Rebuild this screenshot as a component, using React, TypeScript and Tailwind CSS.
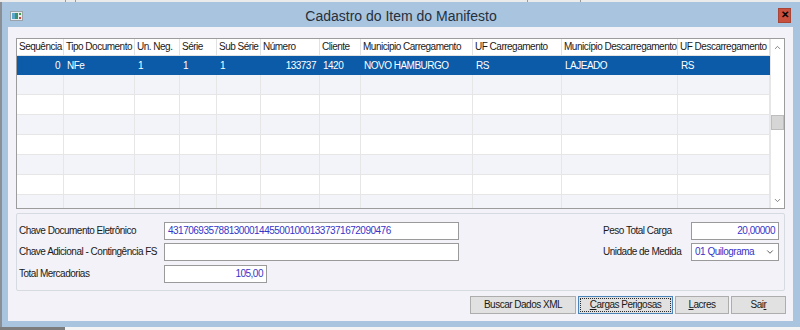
import { ChevronUp, ChevronDown } from "lucide-react";

const cols = [
  { title: "Sequência", w: "w-[47px]", right: true },
  { title: "Tipo Documento", w: "w-[71px]" },
  { title: "Un. Neg.", w: "w-[45px]" },
  { title: "Série", w: "w-[37px]" },
  { title: "Sub Série", w: "w-[44px]" },
  { title: "Número", w: "w-[59px]", right: true },
  { title: "Cliente", w: "w-[41px]" },
  { title: "Municipio Carregamento", w: "w-[112px]" },
  { title: "UF Carregamento", w: "w-[89px]" },
  { title: "Município Descarregamento", w: "w-[116px]" },
  { title: "UF Descarregamento", w: "flex-1" },
];

const selected = ["0", "NFe", "1", "1", "1", "133737", "1420", "NOVO HAMBURGO", "RS", "LAJEADO", "RS"];

const emptyRows = [0, 1, 2, 3, 4, 5, 6];

function WindowIcon() {
  return (
    <svg width="13" height="10" viewBox="0 0 13 10">
      <rect x="0.5" y="0.5" width="12" height="9" fill="#e8ecef" stroke="#9aa3ab" />
      <rect x="2" y="2" width="6" height="6" fill="#3f8f6a" />
      <rect x="2" y="2" width="3" height="6" fill="#5aa7c9" />
      <rect x="9" y="2" width="2" height="2" fill="#3da04a" />
      <rect x="9" y="6" width="2" height="2" fill="#c94a3a" />
    </svg>
  );
}

function Grid() {
  return (
    <div className="flex h-[171px] border border-[#9c9c9c] bg-white overflow-hidden">
      <div className="flex-1 flex flex-col overflow-hidden">
        {/* cabeçalho */}
        <div className="flex h-[17px] shrink-0 border-b border-[#e2e2e2]">
          {cols.map((c) => (
            <div
              key={c.title}
              className={`${c.w} shrink-0 border-r border-[#e2e2e2] pl-[2px] flex items-center whitespace-nowrap overflow-hidden text-[#1a1a1a]`}
            >
              {c.title}
            </div>
          ))}
        </div>
        {/* linha selecionada */}
        <div className="flex h-[19px] shrink-0 bg-[#0b5ba8] text-white">
          {cols.map((c, i) => (
            <div
              key={c.title}
              className={`${c.w} shrink-0 flex items-center whitespace-nowrap overflow-hidden ${
                c.right ? "justify-end pr-[4px]" : "pl-[3px]"
              }`}
            >
              {selected[i]}
            </div>
          ))}
        </div>
        {emptyRows.map((r) => (
          <div
            key={r}
            className={`flex h-[20px] shrink-0 border-b border-[#e6e6e6] ${
              r % 2 === 0 ? "bg-[#f3f4f9]" : "bg-white"
            }`}
          >
            {cols.map((c) => (
              <div key={c.title} className={`${c.w} shrink-0 border-r border-[#e6e6e6]`} />
            ))}
          </div>
        ))}
      </div>
      {/* barra de rolagem */}
      <div className="w-[14px] shrink-0 flex flex-col border-l border-[#e6e6e6] bg-white">
        <div className="h-[17px] flex items-center justify-center text-[#606060]">
          <ChevronUp size={9} strokeWidth={2} />
        </div>
        <div className="flex-1 flex flex-col">
          <div className="h-[59px]" />
          <div className="h-[15px] bg-[#d6d6d6] border border-[#bdbdbd]" />
          <div className="flex-1" />
        </div>
        <div className="h-[15px] flex items-center justify-center text-[#606060]">
          <ChevronDown size={9} strokeWidth={2} />
        </div>
      </div>
    </div>
  );
}

function Input({ value, w, right }: { value?: string; w: string; right?: boolean }) {
  return (
    <div
      className={`${w} h-[18px] bg-white border border-[#9a9a9a] flex items-center text-[#3535c8] whitespace-nowrap overflow-hidden ${
        right ? "justify-end pr-[3px]" : "pl-[3px]"
      }`}
    >
      {value}
    </div>
  );
}

function Button({ children, w, focused }: { children: React.ReactNode; w: string; focused?: boolean }) {
  return (
    <button
      className={`${w} h-[18px] bg-[#e1e1e1] border ${
        focused ? "border-[#4a84b8] p-[1px]" : "border-[#adadad]"
      } text-[#1a1a1a] flex items-stretch`}
    >
      <span
        className={`flex-1 flex items-center justify-center ${
          focused ? "border border-dotted border-[#2a2a2a]" : ""
        }`}
      >
        {children}
      </span>
    </button>
  );
}

export default function App() {
  return (
    <div className="w-[800px] h-[330px] overflow-hidden bg-[#f4f4f4] font-['Liberation_Sans',Arial,sans-serif] text-[10px] tracking-[-0.5px] leading-none">
      {/* faixa da janela de trás */}
      <div className="h-[2px] flex bg-[#ebebeb]">
        <div className="w-[66px] border-r border-[#9a9a9a]" />
        <div className="w-[10px] border-r border-[#9a9a9a]" />
        <div className="w-[452px] border-r border-[#9a9a9a]" />
        <div className="w-[53px] border-r border-[#9a9a9a]" />
      </div>

      {/* janela */}
      <div className="h-[325px] flex flex-col bg-[#a9c4df] border-l-2 border-[#8a8f96]">
        <div className="h-[25px] shrink-0 grid grid-cols-[1fr_auto_1fr] items-center">
          <div className="pl-[8px] pt-[2px]">
            <WindowIcon />
          </div>
          <div className="text-[14px] tracking-normal text-[#25303c] pt-[2px]">
            Cadastro do Item do Manifesto
          </div>
          <div className="flex justify-end pr-[9px] pt-[1px]">
            <div className="w-[13px] h-[15px] bg-[#c7503f] border border-[#a84536] flex items-center justify-center text-black text-[10px] font-bold tracking-normal">
              ✕
            </div>
          </div>
        </div>

        {/* área cliente */}
        <div className="ml-[6px] mr-[7px] h-[294px] bg-[#f2f2f8] flex flex-col pt-[11px] px-[8px]">
          <Grid />

          {/* painel de dados */}
          <div className="mt-[4px] h-[78px] border border-[#d6dbe2] rounded-[2px] flex pt-[8px] pl-[2px] pr-[5px]">
            <div className="flex flex-col">
              <div className="flex items-center h-[18px]">
                <div className="w-[145px] text-[#1a1a1a]">Chave Documento Eletrônico</div>
                <Input w="w-[295px]" value="43170693578813000144550010001337371672090476" />
              </div>
              <div className="flex items-center h-[18px] mt-[3px]">
                <div className="w-[145px] text-[#1a1a1a]">Chave Adicional - Contingência FS</div>
                <Input w="w-[295px]" />
              </div>
              <div className="flex items-center h-[18px] mt-[4px]">
                <div className="w-[145px] text-[#1a1a1a]">Total Mercadorias</div>
                <Input w="w-[103px]" value="105,00" right />
              </div>
            </div>
            <div className="flex-1" />
            <div className="flex flex-col">
              <div className="flex items-center h-[18px]">
                <div className="w-[88px] text-[#1a1a1a]">Peso Total Carga</div>
                <Input w="w-[88px]" value="20,00000" right />
              </div>
              <div className="flex items-center h-[18px] mt-[3px]">
                <div className="w-[88px] text-[#1a1a1a]">Unidade de Medida</div>
                <div className="w-[88px] h-[18px] bg-white border border-[#9a9a9a] flex items-center justify-between pl-[3px] pr-[3px] text-[#3535c8]">
                  <span>01 Quilograma</span>
                  <ChevronDown size={10} strokeWidth={2} className="text-[#404040]" />
                </div>
              </div>
            </div>
          </div>

          {/* botões */}
          <div className="mt-[5px] flex justify-end gap-[2px] -mr-[1px]">
            <Button w="w-[106px]">Buscar Dados XML</Button>
            <Button w="w-[95px]" focused>
              <span>
                <span className="underline">C</span>argas Perigosas
              </span>
            </Button>
            <Button w="w-[54px]">
              <span>
                <span className="underline">L</span>acres
              </span>
            </Button>
            <Button w="w-[55px]">
              <span>
                Sai<span className="underline">r</span>
              </span>
            </Button>
          </div>
        </div>
      </div>

      {/* faixa inferior */}
      <div className="h-[3px] flex">
        <div className="w-[65px] bg-[#7d7d7d]" />
        <div className="flex-1 bg-[#f4f4f4]" />
      </div>
    </div>
  );
}
